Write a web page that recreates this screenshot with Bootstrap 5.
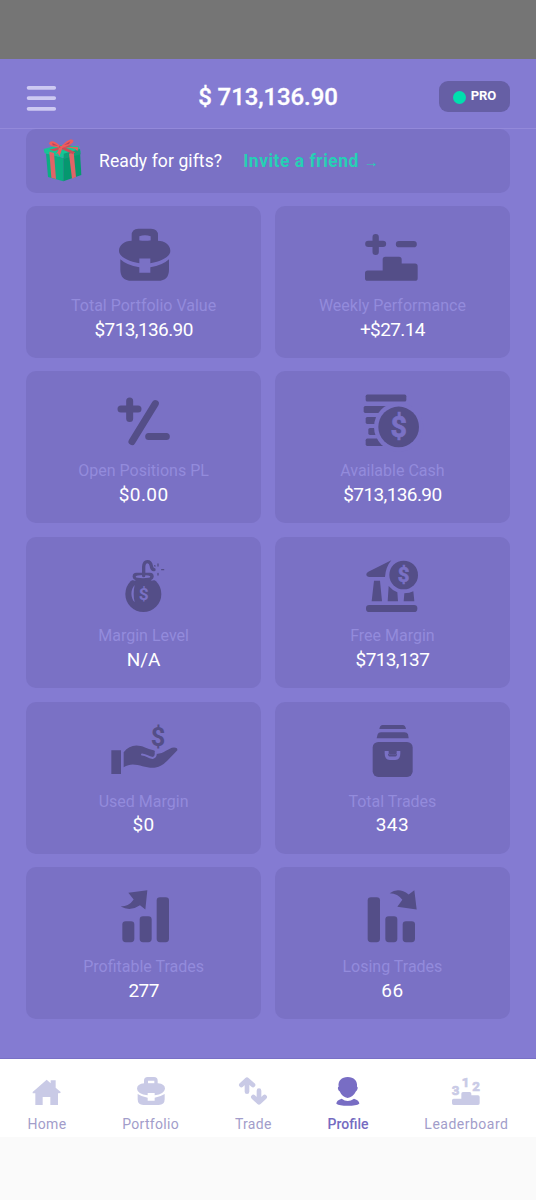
<!DOCTYPE html>
<html lang="en">
<head>
<meta charset="utf-8">
<meta name="viewport" content="width=device-width, initial-scale=1">
<title>Profile</title>
<link href="https://cdn.jsdelivr.net/npm/bootstrap@5.3.0/dist/css/bootstrap.min.css" rel="stylesheet">
<style>
body{font-family:Roboto,"Liberation Sans",sans-serif;background:#fafafa;width:536px;height:1200px;overflow:hidden}
.status{height:59px;background:#757575}
.topbar{height:70.4px;padding:6px 26px 0;border-bottom:1px solid #9389da}
.app{background:#847bd2;height:999.5px;border-bottom:1px solid #786fc6}
.balance{font-size:24px;font-weight:500;letter-spacing:-.1px;line-height:28px;-webkit-text-stroke:.3px #fff}
.side{width:71px}
.pro{height:31px;border-radius:9px;background:#665fa5;font-size:13px;font-weight:700;padding-bottom:1px}
.dot{width:13px;height:13px;border-radius:50%;background:#00dfae;margin:2px 5px 0 0}
.tile{background:#7a71c5;border-radius:10px}
.gift{height:63.4px;margin:0 26px 13.4px;padding-left:16px;font-size:17.5px}
.ask{margin:1px 0 0 15px;letter-spacing:.1px}
.invite{margin:1px 0 0 21px;color:#26d0b4;font-size:17.5px;font-weight:700;letter-spacing:.5px}
.arr{font-size:15px;font-weight:400}
.tiles{display:grid;grid-template-columns:1fr 1fr;gap:13.6px;margin:0 26px}
.stat{height:151.7px;padding-top:22.2px}
.stat svg{width:80px;height:56px;fill:#544e88;stroke:none;overflow:visible}
.lbl{font-size:16px;line-height:20px;margin-top:11.4px;color:#938bdc;letter-spacing:0}
.val{font-size:19px;line-height:24px;margin-top:1.8px;letter-spacing:.4px}
.val.tight{letter-spacing:-.6px}
.val.plain{letter-spacing:0}
.stat svg .ln{fill:none;stroke:#544e88;stroke-linecap:round}
.cut{fill:#7a71c5}
svg text{font-family:Roboto,sans-serif;font-weight:700;text-anchor:middle}
.coin{stroke:#7a71c5;stroke-width:2}
.tabs{height:78px;background:#fff;padding:17.2px 27.5px 0 27.5px;color:#a29dca;font-size:14px}
.tabs svg{width:32px;height:31px;fill:#c9cae6;display:block}
.tabs span{line-height:18px;margin-top:8px;letter-spacing:.3px}
.tabs .on{color:#756bc1}.tabs .on svg{fill:#786dc4}
.tabs .on span{font-weight:500;letter-spacing:0}
.tabs .long{letter-spacing:.5px}
</style>
</head>
<body>
<div class="status"></div>
<main class="app text-white">
  <header class="topbar d-flex align-items-center justify-content-between">
    <div class="side pt-1"><svg class="d-block" width="31" height="28" viewBox="0 0 31 28" stroke="#cdc9f2" stroke-width="3.8" stroke-linecap="round"><path d="M2.6 2.8h25.6M2.6 13.1h25.6M2.6 23.8h25.6"/></svg></div>
    <div class="balance">$ 713,136.90</div>
    <div class="side pro d-flex align-items-center justify-content-center"><i class="dot"></i><span>PRO</span></div>
  </header>
  <section class="tile gift d-flex align-items-center">
    <svg width="42" height="46" viewBox="126 266 126 138">
      <path fill="#0bae83" d="M138 312L190 326V396L144 383Z"/><path fill="#05986f" d="M190 326L240 308L244 377L190 396Z"/>
      <path fill="#16c596" d="M131 299L176 287L236 291L242 308L191 325L134 312Z"/><path fill="#109e79" d="M191 313L240 299L242 315L191 329Z"/>
      <path fill="#e06467" d="M148 307L162 311L168 389L154 385ZM207 313L221 308L228 383L216 388Z"/>
      <path fill="#c94d58" d="M148 301L163 305L216 290L205 287ZM166 291L218 314L226 309L184 289Z"/>
      <path fill="#f05b5c" d="M181 291C164 272 151 273 147 282Q150 293 181 295ZM184 291C199 272 215 266 220 273Q224 284 185 297ZM177 290L188 290L184 306L178 321L174 312L167 314Q177 306 177 290ZM190 292L235 294L232 306L226 298Z"/>
      <path fill="#b54661" d="M157 281L174 289L158 288ZM192 287L211 276L207 284Z"/>
    </svg>
    <span class="ask">Ready for gifts?</span><span class="invite">Invite a friend <span class="arr">→</span></span>
  </section>
  <section class="tiles text-center">
    <div class="tile stat"><svg viewBox="251 84.6 240 168"><path fill-rule="evenodd" d="M334 126V107Q334 87 354 87H392Q413 87 413 107V126ZM357 109V122Q374 127 391 122V109Q374 104 357 109Z"/><path d="M334 123H412C435 123 450 137 450 153C450 171 425 184 390 190V176H357V190C322 184 296 171 296 153C296 137 312 123 334 123Z"/><path d="M300 178Q319 196 357 202V219H390V202Q427 196 446 178V209Q446 243 413 243H334Q300 243 300 209Z"/></svg><div class="lbl">Total Portfolio Value</div><div class="val tight">$713,136.90</div></div>
    <div class="tile stat"><svg viewBox="247 84.6 240 168"><path class="ln" stroke-width="19" d="M296 132H340M318 112V156M388 133H432"/><path d="M294 212H339V179Q339 171 347 171H388Q396 171 396 179V191H436Q444 191 444 199V235Q444 243 436 243H294Q286 243 286 235V220Q286 212 294 212Z"/></svg><div class="lbl">Weekly Performance</div><div class="val tight">+$27.14</div></div>
    <div class="tile stat"><svg viewBox="251 86.2 240 168"><path class="ln" stroke-width="21" d="M302 131H353M328 107V160M405 115L335 229M385 214H438"/></svg><div class="lbl">Open Positions PL</div><div class="val">$0.00</div></div>
    <div class="tile stat"><svg viewBox="247 86.2 240 168"><rect x="288" y="88" width="122" height="21" rx="5"/><rect x="282" y="122" width="100" height="21" rx="5"/><rect x="288" y="155" width="80" height="21" rx="5"/><rect x="296" y="188" width="60" height="21" rx="5"/><rect x="288" y="220" width="80" height="22" rx="5"/><circle class="cut" cx="387" cy="185" r="74"/><circle cx="387" cy="185" r="61"/><text class="cut coin" x="387" y="215" font-size="86">$</text></svg><div class="lbl">Available Cash</div><div class="val tight">$713,136.90</div></div>
    <div class="tile stat"><svg viewBox="251 87 240 168"><circle cx="369" cy="192" r="54"/><path class="cut" d="M325 132H413V151H400Q369 161 338 151H325Z"/><rect x="337" y="128" width="63" height="22" rx="11"/><rect x="345" y="147" width="48" height="12"/><ellipse class="cut" cx="368" cy="140" rx="22" ry="5"/><path class="ln" stroke-width="10" d="M370 137V111Q371 95 381 95Q391 95 393 108Q394 118 401 119"/><path class="ln" stroke-width="4" d="M413 102V108M413 130V135M424 119H430M404 108L403 107"/><path class="cut" d="M343 165C330 179 330 203 343 217C339 199 339 183 343 165Z"/><text class="cut" x="370" y="210" font-size="52">$</text></svg><div class="lbl">Margin Level</div><div class="val plain">N/A</div></div>
    <div class="tile stat"><svg viewBox="247 87 240 168"><path d="M365 91Q348 111 346 141H300Q290 141 290 133Q290 128 296 125ZM313 152H331L337 214H306ZM357 168Q368 181 383 187L385 214H354ZM404 190Q420 190 431 184L434 214H402Z"/><rect x="289" y="225" width="154" height="21" rx="10"/><circle cx="402" cy="135" r="43"/><text class="cut coin" x="402" y="156" font-size="61">$</text></svg><div class="lbl">Free Margin</div><div class="val tight">$713,137</div></div>
    <div class="tile stat"><svg viewBox="251 87.3 240 168"><path d="M273 166H302V237H273ZM310 172C326 151 349 147 374 158Q386 164 397 165Q409 168 407 177C431 178 443 159 461 158Q472 158 471 166C449 187 433 213 406 218C371 223 342 195 310 217Z"/><path fill="none" stroke="#7a71c5" stroke-width="6" stroke-linecap="round" d="M365 179Q374 180 381 184T397 189Q408 187 406 171"/><text x="413" y="153" font-size="76">$</text></svg><div class="lbl">Used Margin</div><div class="val">$0</div></div>
    <div class="tile stat"><svg viewBox="997 87.3 240 168"><path d="M1079 102Q1081 90 1089 90H1149Q1157 90 1159 102ZM1071 130L1074 118Q1076 112 1084 112H1154Q1163 112 1165 118L1167 130Z"/><rect x="1059" y="141" width="120" height="105" rx="17"/><path fill="none" stroke="#7a71c5" stroke-width="10" d="M1100 168V176Q1100 190 1110 190H1127Q1137 190 1137 176V168"/><path class="cut" d="M1096 168H1141V174H1133L1129 179H1109L1104 174H1096Z"/><path d="M1107 168H1131V175L1127 179H1111L1107 175Z"/></svg><div class="lbl">Total Trades</div><div class="val">343</div></div>
    <div class="tile stat"><svg viewBox="251 89.4 240 168"><rect x="306" y="186" width="36" height="63" rx="10"/><rect x="358" y="171" width="36" height="78" rx="10"/><rect x="409" y="114" width="37" height="135" rx="10"/><path d="M324 101L381 93L375 151L359 138Q330 158 301 142Q326 142 340 121Z"/></svg><div class="lbl">Profitable Trades</div><div class="val tight">277</div></div>
    <div class="tile stat"><svg viewBox="997 89.4 240 168"><rect x="1044" y="114" width="37" height="135" rx="10"/><rect x="1097" y="171" width="36" height="78" rx="10"/><rect x="1149" y="186" width="37" height="63" rx="10"/><path d="M1110 102Q1137 83 1167 106L1184 93L1191 151L1133 143L1148 122Q1135 103 1110 102Z"/></svg><div class="lbl">Losing Trades</div><div class="val">66</div></div>
  </section>
</main>
<nav class="tabs d-flex justify-content-between">
  <div class="d-flex flex-column align-items-center"><svg viewBox="96 78 96 93"><path d="M143 89L155 100V91H170V113L186 127L181 130H177V165H154V141H131V165H109V130H101V126Z"/></svg><span>Home</span></div>
  <div class="d-flex flex-column align-items-center"><svg viewBox="405 78 96 93"><path fill-rule="evenodd" d="M432 103V92Q432 81 443 81H462Q473 81 473 92V103ZM444 92V101H463V92Z"/><path d="M433 100H474Q495 102 495 116Q493 132 464 136V129H443V136Q412 132 411 116Q411 102 433 100ZM413 132Q424 140 443 143V152H464V143Q482 140 494 132V148Q494 165 476 165H430Q413 165 413 148Z"/></svg><span>Portfolio</span></div>
  <div class="d-flex flex-column align-items-center"><svg viewBox="711 77 96 93"><g fill="none" stroke="#c9cae6" stroke-width="14" stroke-linecap="round" stroke-linejoin="round"><path d="M741 124V92M724 104L741 88L759 104M777 121V150M760 140L777 156L794 140"/></g><path d="M741 88L759 104H724ZM777 156L794 140H760Z"/></svg><span>Trade</span></div>
  <div class="on d-flex flex-column align-items-center"><svg viewBox="197 78 96 93"><path d="M244 81C263 81 274 93 272 110C277 112 272 122 269 124C263 136 254 143 244 144C234 143 225 136 220 124C216 122 212 112 217 110C214 93 226 81 244 81ZM226 146Q244 160 263 146Q279 151 279 161Q270 167 244 167Q219 167 210 161Q210 151 226 146Z"/></svg><span>Profile</span></div>
  <div class="d-flex flex-column align-items-center"><svg viewBox="553 78 96 93"><path d="M564 146H587V131Q587 126 592 126H612Q617 126 617 131V136H637Q642 136 642 141V160Q642 165 637 165H564Q559 165 559 160V151Q559 146 564 146Z"/><g font-size="40" stroke="#c9cae6" stroke-width="2"><text x="570" y="136">3</text><text x="600" y="112">1</text><text x="631" y="122">2</text></g></svg><span class="long">Leaderboard</span></div>
</nav>
<script src="https://cdn.jsdelivr.net/npm/bootstrap@5.3.0/dist/js/bootstrap.bundle.min.js"></script>
</body>
</html>
